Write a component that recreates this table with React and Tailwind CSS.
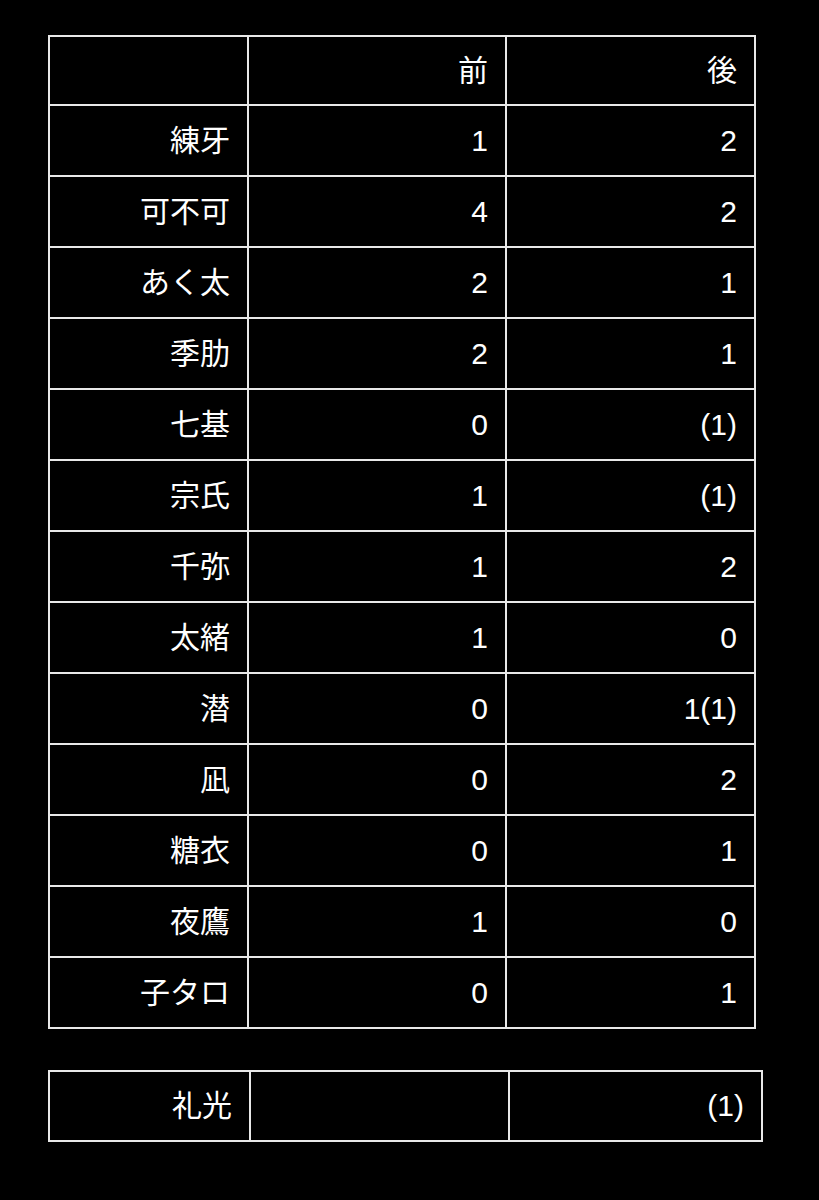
import React from 'react';

const rows = [
  ['練牙', '1', '2'],
  ['可不可', '4', '2'],
  ['あく太', '2', '1'],
  ['季肋', '2', '1'],
  ['七基', '0', '(1)'],
  ['宗氏', '1', '(1)'],
  ['千弥', '1', '2'],
  ['太緒', '1', '0'],
  ['潜', '0', '1(1)'],
  ['凪', '0', '2'],
  ['糖衣', '0', '1'],
  ['夜鷹', '1', '0'],
  ['子タロ', '0', '1'],
];

const cell = 'border-2 border-[#e8e8e8] text-right pr-[17px] align-middle';

export default function App() {
  return (
    <div
      className="min-h-[1200px] w-full bg-black text-white pt-[35px] pl-[48px]"
      style={{ fontFamily: '"Liberation Sans", "Noto Sans CJK JP", sans-serif' }}
    >
      {/* main table */}
      <table className="w-[706px] table-fixed border-collapse text-[30px] leading-none">
        <colgroup>
          <col className="w-[199px]" />
          <col className="w-[258px]" />
          <col className="w-[249px]" />
        </colgroup>
        <tbody>
          <tr className="h-[69px]">
            <td className={cell}></td>
            <td className={cell}>前</td>
            <td className={cell}>後</td>
          </tr>
          {rows.map(([name, a, b]) => (
            <tr key={name} className="h-[71px]">
              <td className={cell}>{name}</td>
              <td className={cell}>{a}</td>
              <td className={cell}>{b}</td>
            </tr>
          ))}
        </tbody>
      </table>

      {/* extra row */}
      <table className="mt-[41px] w-[713px] table-fixed border-collapse text-[30px] leading-none">
        <colgroup>
          <col className="w-[201px]" />
          <col className="w-[259px]" />
          <col className="w-[253px]" />
        </colgroup>
        <tbody>
          <tr className="h-[70px]">
            <td className={cell}>礼光</td>
            <td className={cell}></td>
            <td className={cell}>(1)</td>
          </tr>
        </tbody>
      </table>
    </div>
  );
}
